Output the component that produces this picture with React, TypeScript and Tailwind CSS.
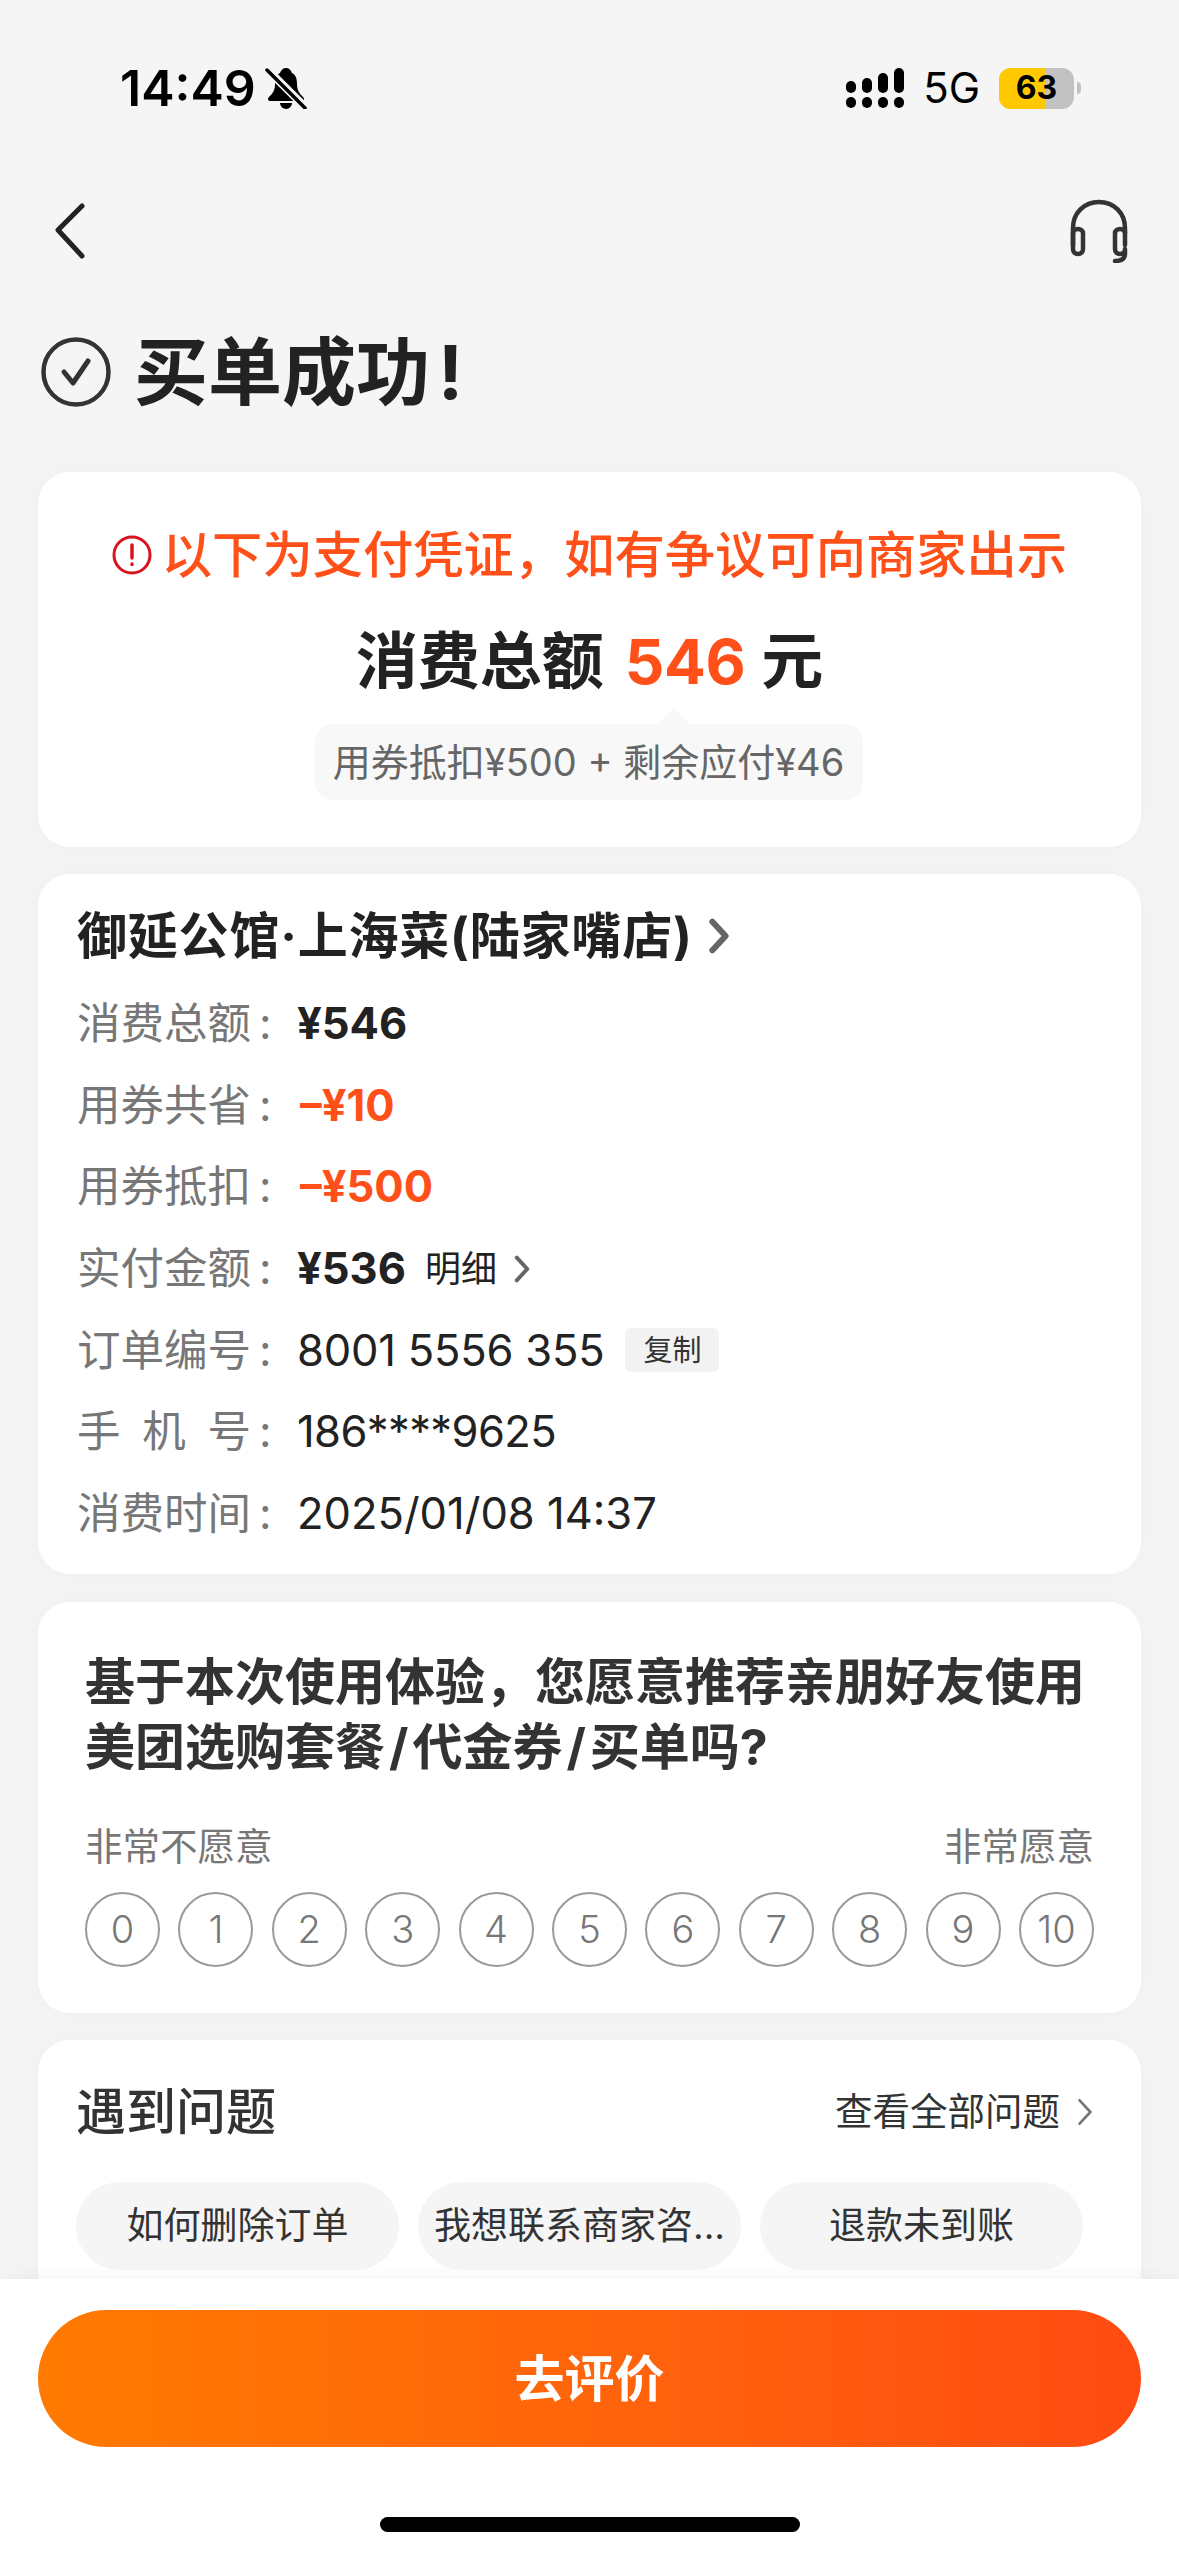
import React from "react";

const rows = [
  { label: "消费总额", value: "¥546", cls: "font-bold text-[#222]" },
  { label: "用券共省", value: "–¥10", cls: "ml-[3px] font-bold text-[#ff5019]" },
  { label: "用券抵扣", value: "–¥500", cls: "ml-[3px] font-bold text-[#ff5019]" },
  { label: "实付金额", value: "¥536", cls: "font-bold text-[#222]", detail: true },
  { label: "订单编号", value: "8001 5556 355", cls: "tracking-[-0.2px] text-[#222]", copy: true },
  { label: "手机号", value: "186****9625", cls: "tracking-[-0.6px] text-[#222]", spread: true },
  { label: "消费时间", value: "2025/01/08 14:37", cls: "text-[#222]" },
];

const chips = ["如何删除订单", "我想联系商家咨...", "退款未到账"];

function Chevron({ w, h, sw, color }: { w: number; h: number; sw: number; color: string }) {
  return (
    <svg width={w} height={h} viewBox="0 0 20 32" fill="none" stroke={color} strokeWidth={sw} strokeLinecap="round" strokeLinejoin="round">
      <path d="M4 3l12 13L4 29" />
    </svg>
  );
}

function StatusBar() {
  const bars = ["h-[12px]", "h-[15px]", "h-[20px]", "h-[25px]"];
  return (
    <div className="flex h-[176px] items-center justify-between pl-[120px] pr-[98px]">
      <div className="flex items-center gap-[9px]">
        <span className="text-[50px] leading-none font-semibold text-black">14:49</span>
        <svg width="42" height="42" viewBox="0 0 42 42">
          <path d="M21 1c3 0 5 2 6 5 4 2 5 6 5 11 0 6 2 9 6 13 2 2 1 4-2 4H6c-3 0-4-2-2-4 4-4 6-7 6-13 0-5 1-9 5-11 1-3 3-5 6-5z" fill="#000" />
          <path d="M15 36h12c0 3-3 6-6 6s-6-3-6-6z" fill="#000" />
          <path d="M1 1l40 40" stroke="#f5f5f5" strokeWidth="8" />
          <path d="M2 3l38 38" stroke="#000" strokeWidth="3.5" strokeLinecap="round" />
        </svg>
      </div>
      <div className="flex items-center">
        <div className="flex items-end gap-[6px]">
          {bars.map((t) => (
            <div key={t} className="flex w-[10px] flex-col gap-[4px]">
              <div className={`${t} rounded-[5px] bg-black`} />
              <div className="h-[11px] rounded-full bg-black" />
            </div>
          ))}
        </div>
        <span className="ml-[19px] text-[42px] leading-none text-black">5G</span>
        <div className="relative ml-[19px] flex h-[41px] w-[75px] items-center justify-center overflow-hidden rounded-[12px] bg-[#c2c2c2]">
          <div className="absolute inset-y-0 left-0 w-[47px] bg-[#ffc800]" />
          <span className="relative text-[32px] leading-none font-bold text-black">63</span>
        </div>
        <div className="ml-[3px] h-[12px] w-[4px] rounded-r-full bg-[#c2c2c2]" />
      </div>
    </div>
  );
}

export default function App() {
  return (
    <div className="flex h-[2556px] w-[1179px] flex-col overflow-hidden bg-[#f5f5f5] font-['Inter','Noto_Sans_CJK_SC',sans-serif]">
      <div className="min-h-0 flex-1 overflow-hidden">
        <StatusBar />

        <div className="flex h-[110px] items-center justify-between pl-[55px] pr-[51px]">
          <svg width="30" height="56" viewBox="0 0 30 56" fill="none" stroke="#222" strokeWidth="5" strokeLinecap="round" strokeLinejoin="round">
            <path d="M27 3L3 27l24 26" />
          </svg>
          <svg width="58" height="64" viewBox="0 0 58 64" fill="none" stroke="#333" strokeWidth="4.5" strokeLinecap="round" strokeLinejoin="round">
            <path d="M3 46V29C3 14 14 3 29 3s26 11 26 26v17" />
            <path d="M3 34c0-2 2-4 5-4s5 2 5 4v16c0 3-2 5-5 5s-5-2-5-5z" />
            <path d="M55 34c0-2-2-4-5-4s-5 2-5 4v16c0 3 2 5 5 5s5-2 5-5v5c0 5-4 7-10 7" />
          </svg>
        </div>

        <div className="flex h-[186px] items-center gap-[23px] pb-[14px] pl-[41px]">
          <svg width="70" height="70" viewBox="0 0 70 70" fill="none" stroke="#333" strokeLinecap="round" strokeLinejoin="round">
            <circle cx="35" cy="35" r="32.5" strokeWidth="4.5" />
            <path d="M23 35l9 11 15-22" strokeWidth="5" />
          </svg>
          <h1 className="flex text-[74px] leading-none font-bold text-[#222]">
            买单成功
            <span className="ml-[8px]">!</span>
          </h1>
        </div>

        <div className="flex flex-col gap-[27px] px-[38px]">
          <section className="flex flex-col items-center rounded-[32px] bg-white pb-[47px] pt-[58px] shadow-[0_0_24px_rgba(0,0,0,0.03)]">
            <div className="flex h-[50px] items-center gap-[10px]">
              <svg width="40" height="40" viewBox="0 0 40 40" fill="none" stroke="#d9141e" strokeLinecap="round">
                <circle cx="20" cy="20" r="18" strokeWidth="3" />
                <path d="M20 10v13" strokeWidth="3.5" />
                <path d="M20 29v.5" strokeWidth="3.5" />
              </svg>
              <p className="text-[50.3px] leading-none font-medium text-[#ff5019]">以下为支付凭证，如有争议可向商家出示</p>
            </div>
            <p className="mt-[47px] flex h-[70px] items-center text-[62px] leading-none font-bold text-[#222]">
              消费总额
              <span className="ml-[21px] mr-[16px] tracking-[-0.5px] text-[#ff5019]">546</span>元
            </p>
            <div className="relative mt-[27px] flex h-[76px] w-[548px] -translate-x-[1px] items-center justify-center rounded-[18px] bg-[#f8f8f8]">
              <div className="absolute -top-[16px] left-[343px] h-0 w-0 border-x-[16px] border-b-[16px] border-x-transparent border-b-[#f8f8f8]" />
              <span className="whitespace-nowrap text-[38px] leading-none text-[#666]">用券抵扣¥500 + 剩余应付¥46</span>
            </div>
          </section>

          <section className="rounded-[32px] bg-white pb-[19px] pl-[39px] pr-[39px] pt-[32px] shadow-[0_0_24px_rgba(0,0,0,0.03)]">
            <div className="mb-[17px] flex h-[60px] items-center gap-[15px]">
              <h2 className="text-[50px] leading-none font-bold tracking-[0.8px] text-[#222]">御延公馆·上海菜(陆家嘴店)</h2>
              <Chevron w={22} h={36} sw={5.5} color="#666" />
            </div>
            {rows.map((r) => (
              <div key={r.label} className="flex h-[81.67px] items-center whitespace-nowrap text-[43.5px] leading-none">
                <div className="flex w-[220px] shrink-0 text-[#777]">
                  {r.spread ? (
                    <span className="flex w-[174px] justify-between">
                      <span>手</span>
                      <span>机</span>
                      <span>号</span>
                    </span>
                  ) : (
                    <span className="w-[174px]">{r.label}</span>
                  )}
                  <span className="ml-[8px] w-[20px]">:</span>
                </div>
                <span className={r.cls}>{r.value}</span>
                {r.detail && (
                  <span className="ml-[19px] flex items-center gap-[16px] text-[36px] text-[#222]">
                    明细
                    <Chevron w={18} h={28} sw={4.5} color="#666" />
                  </span>
                )}
                {r.copy && (
                  <span className="ml-[21px] flex h-[44px] w-[94px] items-center justify-center rounded-[6px] bg-[#f2f2f2] text-[29px] text-[#333]">
                    复制
                  </span>
                )}
              </div>
            ))}
          </section>

          <section className="mt-[1px] rounded-[32px] bg-white pb-[46px] pl-[47px] pr-[47px] pt-[48px] shadow-[0_0_24px_rgba(0,0,0,0.03)]">
            <h2 className="text-[50px] leading-[65px] font-bold text-[#333]">
              基于本次使用体验，您愿意推荐亲朋好友使用
              <br />
              美团选购套餐<span className="mx-[4px]">/</span>代金券<span className="mx-[4px]">/</span>买单吗?
            </h2>
            <div className="mt-[45px] flex h-[44px] items-center justify-between text-[37.5px] leading-none text-[#777]">
              <span>非常不愿意</span>
              <span>非常愿意</span>
            </div>
            <div className="mt-[23px] flex justify-between">
              {Array.from({ length: 11 }, (_, i) => (
                <div key={i} className="flex h-[75px] w-[75px] items-center justify-center rounded-full border-2 border-[#999] text-[38px] leading-none font-light text-[#777]">
                  {i}
                </div>
              ))}
            </div>
          </section>

          <section className="h-[400px] rounded-[32px] bg-white pl-[38px] pr-[47px] pt-[42px] shadow-[0_0_24px_rgba(0,0,0,0.03)]">
            <div className="flex h-[60px] items-center justify-between">
              <h2 className="text-[50px] leading-none font-medium text-[#333]">遇到问题</h2>
              <div className="flex items-center gap-[16px] text-[37.5px] leading-none text-[#333]">
                查看全部问题
                <Chevron w={18} h={32} sw={3} color="#777" />
              </div>
            </div>
            <div className="mt-[40px] flex gap-[19px]">
              {chips.map((c) => (
                <div key={c} className="flex h-[88px] w-[323px] items-center justify-center whitespace-nowrap rounded-full bg-[#f5f5f5] text-[37px] text-[#333]">
                  {c}
                </div>
              ))}
            </div>
          </section>
        </div>
      </div>

      <footer className="relative flex h-[277px] shrink-0 flex-col items-center bg-white px-[38px] pt-[31px] shadow-[0_-4px_16px_rgba(0,0,0,0.04)]">
        <button className="flex h-[137px] w-full items-center justify-center rounded-full bg-gradient-to-r from-[#ff7a00] to-[#ff4b12] text-[50px] leading-none font-bold text-white">
          去评价
        </button>
        <div className="mt-[70px] h-[15px] w-[420px] rounded-full bg-black" />
      </footer>
    </div>
  );
}
